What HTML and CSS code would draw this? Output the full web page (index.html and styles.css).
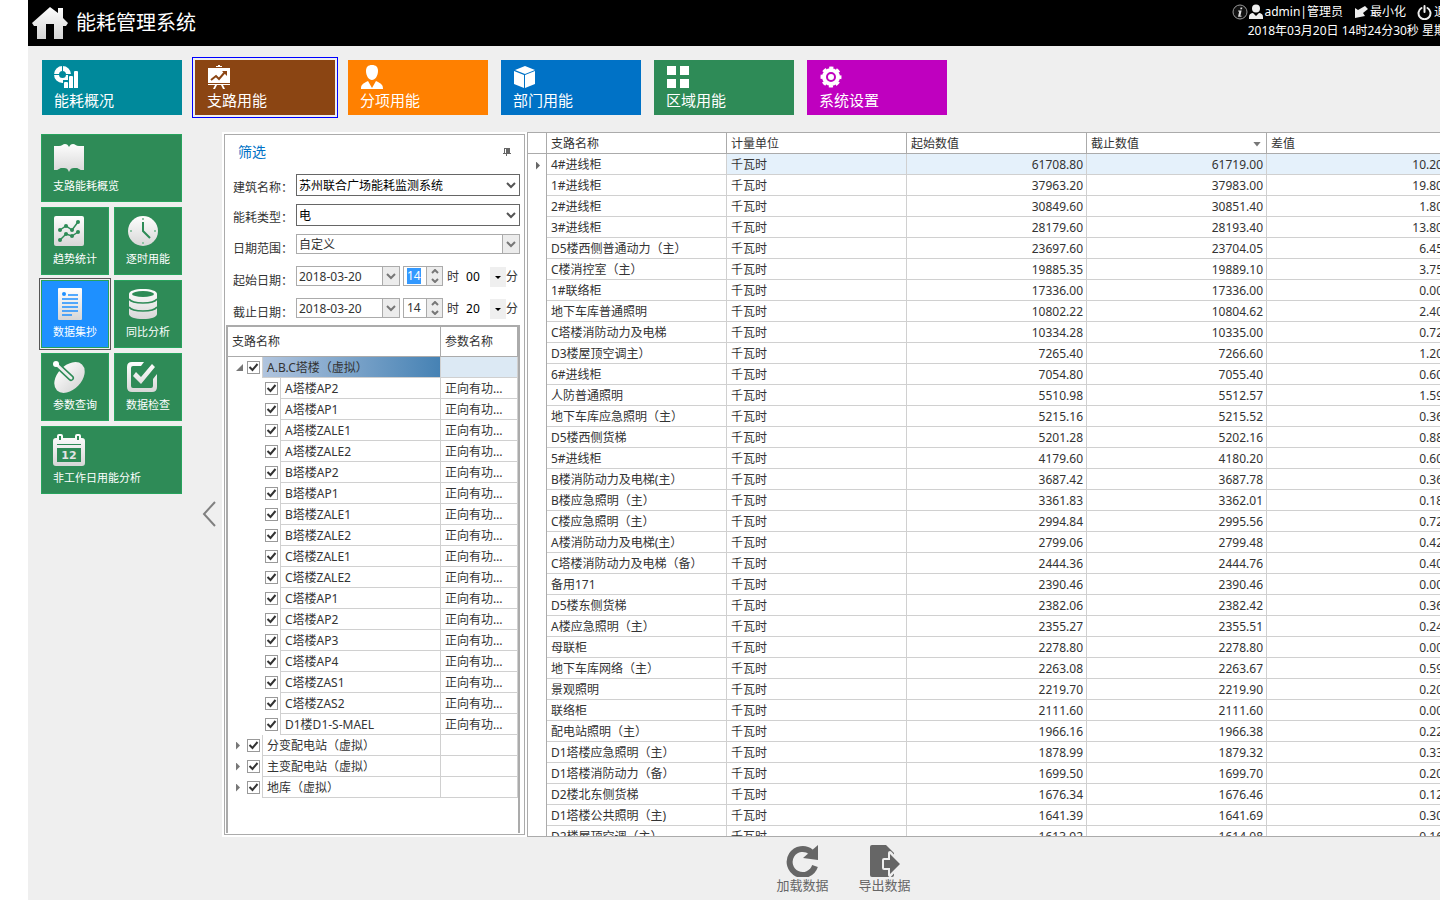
FILE: index.html
```html
<!DOCTYPE html>
<html lang="zh-CN">

<head>
  <meta charset="UTF-8" />
  <meta name="viewport" content="width=device-width, initial-scale=1.0" />
  <link rel="stylesheet" href="styles.css">
  <title>能耗管理系统</title>
</head>

<body>
  <!-- 图标共用的渐变 -->
  <svg class="defs" width="0" height="0" aria-hidden="true">
    <defs>
      <linearGradient id="silver" x1="0" y1="0" x2="0" y2="32" gradientUnits="userSpaceOnUse">
        <stop offset="0" stop-color="#fff" />
        <stop offset="1" stop-color="#d6d6d6" />
      </linearGradient>
    </defs>
  </svg>

  <div class="app">
    <header class="header">
      <div class="brand">
        <svg width="36" height="34" viewBox="0 0 36 34" fill="url(#silver)">
          <path d="M18 1L0 17l2 3h3v13h9V18h8v15h9V20h3l2-3-5-5V2h-5v5z" />
        </svg>
        <h1>能耗管理系统</h1>
      </div>
      <div class="status">
        <div class="status-row">
          <button class="link" aria-label="关于">
            <svg width="16" height="16" viewBox="0 0 16 16">
              <circle cx="8" cy="8" r="7" fill="#111" stroke="#999" />
              <path d="M8.600 3.500h1.800l-.4 1.800H8.200zM6.200 6.500h3.400l-1.200 5.200h1.200l-.2 1H6l1.200-5.200H6z" fill="#ddd" />
            </svg>
          </button>
          <button class="link user">
            <svg width="14" height="16" viewBox="0 0 14 16" fill="#eee">
              <circle cx="7" cy="4.500" r="4" />
              <path d="M0 15v-2c0-3 2-4 4-4l3 3 3-3c2 0 4 1 4 4v2z" />
            </svg>
            <span>admin|管理员</span>
          </button>
          <button class="link">
            <svg width="14" height="14" viewBox="0 0 14 14" fill="#eee">
              <path d="M11 1l3 3-5 4 2 3-10 2V3l3 2z" />
            </svg>
            <span>最小化</span>
          </button>
          <button class="link">
            <svg width="15" height="15" viewBox="0 0 15 15" fill="none" stroke="#eee" stroke-width="2" stroke-linecap="round">
              <path d="M4.500 3a6 6 0 1 0 6 0M7.500 1v6" />
            </svg>
            <span>退出</span>
          </button>
        </div>
        <div>2018年03月20日 14时24分30秒 星期二</div>
      </div>
    </header>

    <nav class="nav">
      <button class="nav-tile teal">
        <svg width="24" height="24" viewBox="0 0 24 24">
          <circle cx="8.500" cy="9.500" r="6" fill="none" stroke="#fff" stroke-width="5" />
          <path d="M0 9.500h6M11 9.500h6M8.500 1v5" stroke="#00899b" />
          <path d="M9 15h5V9h5V5h5v19H9z" fill="#00899b" />
          <path d="M10 18q0-1 1-1h2q1 0 1 1v5h-4zM15 12q0-1 1-1h2q1 0 1 1v11h-4zM20 7q0-1 1-1h2q1 0 1 1v16h-4z" fill="#fff" />
        </svg>
        <span>能耗概况</span>
      </button>
      <button class="nav-tile brown active">
        <svg width="24" height="24" viewBox="0 0 24 24">
          <path d="M9 1h2V0h2v1h2v1h-6zM1 3h22v15H1zM1 19h22v1H1zM8 20h2l-2 4H6zM14 20h2l2 4h-2z" fill="#fff" />
          <path d="M4 15l5-4 3 3 6-7" fill="none" stroke="#8b4513" stroke-width="2" />
          <path d="M15 6h5v5z" fill="#8b4513" />
        </svg>
        <span>支路用能</span>
      </button>
      <button class="nav-tile orange">
        <svg width="24" height="24" viewBox="0 0 24 24" fill="#fff">
          <path d="M12 0c4 0 6 2 6 6 0 5-3 9-6 9s-6-4-6-9c0-4 2-6 6-6zM1 24c0-4 1-5 7-8l4 7 4-7c6 3 7 4 7 8z" />
        </svg>
        <span>分项用能</span>
      </button>
      <button class="nav-tile blue">
        <svg width="24" height="24" viewBox="0 0 24 24" fill="#fff">
          <path d="M12 1l10 4-10 4L2 5zM1 6l10 4v13L1 19zM22 6l-10 4v13l10-4z" />
        </svg>
        <span>部门用能</span>
      </button>
      <button class="nav-tile green">
        <svg width="24" height="24" viewBox="0 0 24 24" fill="#fff">
          <path d="M1 1h9v9H1zM14 1h9v9h-9zM1 14h9v9H1zM14 14h9v9h-9z" />
        </svg>
        <span>区域用能</span>
      </button>
      <button class="nav-tile purple">
        <svg width="24" height="24" viewBox="0 0 24 24">
          <circle cx="12" cy="12" r="9" fill="none" stroke="#fff" stroke-width="3" stroke-dasharray="4 3.070" stroke-dashoffset="2" />
          <circle cx="12" cy="12" r="9" fill="#fff" />
          <circle cx="12" cy="12" r="4" fill="none" stroke="#bf00bf" stroke-width="2" />
        </svg>
        <span>系统设置</span>
      </button>
    </nav>

    <div class="content">
      <aside class="sidebar">
        <button class="tile wide">
          <svg width="32" height="32" viewBox="0 0 32 32" fill="url(#silver)">
            <path d="M1 4h5c3 0 4-2 6-2s3 1 4 3c1-2 2-3 4-3s3 2 6 2h5v24h-2c-3 0-3-2-6-2s-5 0-6 2l-1 2-1-2c-1-2-3-2-6-2s-3 2-6 2H1z" />
          </svg>
          <span>支路能耗概览</span>
        </button>
        <button class="tile">
          <svg width="32" height="32" viewBox="0 0 32 32">
            <rect x="1" y="1" width="30" height="30" rx="2" fill="url(#silver)" />
            <g fill="none" stroke="#2e8b57" stroke-width="1.500">
              <path d="M7 15l6-4 6 4 6-8M7 25l6-6 6 2 6-4" />
            </g>
            <g fill="#2e8b57">
              <circle cx="7" cy="15" r="2" /><circle cx="13" cy="11" r="2" /><circle cx="19" cy="15" r="2" /><circle cx="25" cy="7" r="2" />
              <circle cx="7" cy="25" r="2" /><circle cx="13" cy="19" r="2" /><circle cx="19" cy="21" r="2" /><circle cx="25" cy="17" r="2" />
            </g>
          </svg>
          <span>趋势统计</span>
        </button>
        <button class="tile">
          <svg width="32" height="32" viewBox="0 0 32 32">
            <circle cx="17" cy="16" r="15" fill="url(#silver)" />
            <path d="M17 7v9l7 7" fill="none" stroke="#2e8b57" stroke-width="2" />
            <path d="M16 3h2v2h-2zM16 27h2v2h-2zM4 15h2v2H4zM28 15h2v2h-2z" fill="#8fc3a5" />
          </svg>
          <span>逐时用能</span>
        </button>
        <button class="tile active">
          <svg width="32" height="32" viewBox="0 0 32 32">
            <rect x="5" y="0" width="24" height="32" rx="1" fill="url(#silver)" />
            <circle cx="11" cy="6" r="2" fill="#1e90ff" />
            <path d="M15 7h10M9 11h16M9 15h16M9 19h16M9 23h16M9 27h10" stroke="#1e90ff" stroke-width="1.500" />
          </svg>
          <span>数据集抄</span>
        </button>
        <button class="tile">
          <svg width="32" height="32" viewBox="0 0 32 32">
            <path d="M3 6v20c0 3 6 5 14 5s14-2 14-5V6c0-3-6-5-14-5S3 3 3 6z" fill="url(#silver)" />
            <ellipse cx="17" cy="6" rx="11" ry="3" fill="#2e8b57" />
            <path d="M3 11c2 3 8 4 14 4s12-1 14-4M3 19c2 3 8 4 14 4s12-1 14-4" fill="none" stroke="#2e8b57" stroke-width="1.500" />
          </svg>
          <span>同比分析</span>
        </button>
        <button class="tile">
          <svg width="32" height="32" viewBox="0 0 32 32">
            <ellipse cx="16.500" cy="16.500" rx="18" ry="12" transform="rotate(-46 16.500 16.500)" fill="url(#silver)" />
            <path d="M3 3l15 14" stroke="#2e8b57" stroke-width="6" stroke-linecap="round" />
            <path d="M3 3l15 14" stroke="#eee" stroke-width="3" stroke-linecap="round" />
            <circle cx="3" cy="3" r="3" fill="#fff" />
          </svg>
          <span>参数查询</span>
        </button>
        <button class="tile">
          <svg width="32" height="32" viewBox="0 0 32 32">
            <path d="M18 1H6Q1 1 1 6v20q0 5 5 5h20q5 0 5-5V13l-4 5v7q0 2-2 2H7q-2 0-2-2V7q0-2 2-2h8z" fill="url(#silver)" />
            <path d="M7 15l3-4 5 5L26 3l3 3-14 17z" fill="url(#silver)" />
          </svg>
          <span>数据检查</span>
        </button>
        <button class="tile wide">
          <svg width="32" height="32" viewBox="0 0 32 32">
            <path d="M3 4h1V2q0-2 2-2h2q2 0 2 2v2h12V2q0-2 2-2h2q2 0 2 2v2h1q3 0 3 3v22q0 3-3 3H3q-3 0-3-3V7q0-3 3-3z" fill="url(#silver)" />
            <path d="M6 2h2v4H6zM24 2h2v4h-2zM4 10h24v1H4zM4 14h24v14H4z" fill="#2e8b57" />
            <text class="cal-day" x="16" y="25" text-anchor="middle">12</text>
          </svg>
          <span>非工作日用能分析</span>
        </button>
      </aside>

      <button class="collapse" aria-label="收起">
        <svg width="14" height="26" viewBox="0 0 14 26" fill="none" stroke="#808080" stroke-width="2">
          <path d="M13 1L2 13l11 12" />
        </svg>
      </button>

      <main class="main">
        <div class="panels">
          <section class="filter">
            <div class="filter-head">
              <h2>筛选</h2>
              <button class="pin" aria-label="固定">
                <svg width="8" height="8" viewBox="0 0 8 8" fill="#666">
                  <path d="M1 0h6v5h1v1H0V5h1zM3 6h1v2H3zM2 1v4h1V1z" fill-rule="evenodd" />
                </svg>
              </button>
            </div>

            <form class="form">
              <div class="field">
                <label for="building">建筑名称：</label>
                <select id="building" class="box combo dark">
                  <option>苏州联合广场能耗监测系统</option>
                </select>
              </div>
              <div class="field">
                <label for="energy">能耗类型：</label>
                <select id="energy" class="box combo dark">
                  <option>电</option>
                </select>
              </div>
              <div class="field tall">
                <label for="range">日期范围：</label>
                <select id="range" class="box combo">
                  <option>自定义</option>
                </select>
              </div>
              <div class="field tall">
                <label for="start">起始日期：</label>
                <select id="start" class="box combo date">
                  <option>2018-03-20</option>
                </select>
                <div class="box spin">
                  <input id="start-hour" type="text" value="14" aria-label="起始小时">
                  <div class="spin-buttons">
                    <button type="button" aria-label="加"><svg width="8" height="5" viewBox="0 0 8 5"><path d="M1 4l3-3 3 3" /></svg></button>
                    <button type="button" aria-label="减"><svg width="8" height="5" viewBox="0 0 8 5"><path d="M1 1l3 3 3-3" /></svg></button>
                  </div>
                </div>
                <span class="unit">时</span>
                <select class="minute" aria-label="起始分钟">
                  <option>00</option>
                </select>
                <span class="unit-end">分</span>
              </div>
              <div class="field tall">
                <label for="end">截止日期：</label>
                <select id="end" class="box combo date">
                  <option>2018-03-20</option>
                </select>
                <div class="box spin">
                  <input type="text" value="14" aria-label="截止小时">
                  <div class="spin-buttons">
                    <button type="button" aria-label="加"><svg width="8" height="5" viewBox="0 0 8 5"><path d="M1 4l3-3 3 3" /></svg></button>
                    <button type="button" aria-label="减"><svg width="8" height="5" viewBox="0 0 8 5"><path d="M1 1l3 3 3-3" /></svg></button>
                  </div>
                </div>
                <span class="unit">时</span>
                <select class="minute" aria-label="截止分钟">
                  <option>20</option>
                </select>
                <span class="unit-end">分</span>
              </div>
            </form>

            <div class="tree-wrap">
              <table class="tree">
                <thead>
                  <tr>
                    <th>支路名称</th>
                    <th class="param">参数名称</th>
                  </tr>
                </thead>
                <tbody id="tree"></tbody>
              </table>
            </div>
          </section>

          <section class="grid-wrap">
            <table class="grid">
              <thead>
                <tr>
                  <th class="mark"></th>
                  <th>支路名称</th>
                  <th>计量单位</th>
                  <th>起始数值</th>
                  <th class="sorted">截止数值</th>
                  <th>差值</th>
                </tr>
              </thead>
              <tbody id="grid"></tbody>
            </table>
          </section>
        </div>

        <footer class="actions">
          <button class="action">
            <svg width="32" height="32" viewBox="0 0 32 32">
              <path d="M25 7A13 13 0 1 0 29 21" fill="none" stroke="#666" stroke-width="6" />
              <path d="M32 0v15l-15-2z" fill="#666" />
            </svg>
            <span>加载数据</span>
          </button>
          <button class="action">
            <svg width="32" height="32" viewBox="0 0 32 32">
              <path d="M3 0h14l8 8v22q0 2-2 2H3q-2 0-2-2V2q0-2 2-2z" fill="#666" />
              <path d="M15 15h6V8l10 11-10 11v-7h-6z" fill="#666" stroke="#efefef" stroke-width="4" stroke-linejoin="round" />
              <path d="M15 15h6V9l10 10-10 10v-6h-6z" fill="#666" />
            </svg>
            <span>导出数据</span>
          </button>
        </footer>
      </main>
    </div>
  </div>

  <script>
    // 支路树：[层级, 名称]
    const branches = [
      [0, 'A.B.C塔楼（虚拟）'],
      [1, 'A塔楼AP2'],
      [1, 'A塔楼AP1'],
      [1, 'A塔楼ZALE1'],
      [1, 'A塔楼ZALE2'],
      [1, 'B塔楼AP2'],
      [1, 'B塔楼AP1'],
      [1, 'B塔楼ZALE1'],
      [1, 'B塔楼ZALE2'],
      [1, 'C塔楼ZALE1'],
      [1, 'C塔楼ZALE2'],
      [1, 'C塔楼AP1'],
      [1, 'C塔楼AP2'],
      [1, 'C塔楼AP3'],
      [1, 'C塔楼AP4'],
      [1, 'C塔楼ZAS1'],
      [1, 'C塔楼ZAS2'],
      [1, 'D1楼D1-S-MAEL'],
      [0, '分变配电站（虚拟）'],
      [0, '主变配电站（虚拟）'],
      [0, '地库（虚拟）']
    ]

    // 抄表数据：[名称, 起始, 截止, 差值]
    const readings = [
      ['4#进线柜', '61708.80', '61719.00', '10.20'],
      ['1#进线柜', '37963.20', '37983.00', '19.80'],
      ['2#进线柜', '30849.60', '30851.40', '1.80'],
      ['3#进线柜', '28179.60', '28193.40', '13.80'],
      ['D5楼西侧普通动力（主）', '23697.60', '23704.05', '6.45'],
      ['C楼消控室（主）', '19885.35', '19889.10', '3.75'],
      ['1#联络柜', '17336.00', '17336.00', '0.00'],
      ['地下车库普通照明', '10802.22', '10804.62', '2.40'],
      ['C塔楼消防动力及电梯', '10334.28', '10335.00', '0.72'],
      ['D3楼屋顶空调主）', '7265.40', '7266.60', '1.20'],
      ['6#进线柜', '7054.80', '7055.40', '0.60'],
      ['人防普通照明', '5510.98', '5512.57', '1.59'],
      ['地下车库应急照明（主）', '5215.16', '5215.52', '0.36'],
      ['D5楼西侧货梯', '5201.28', '5202.16', '0.88'],
      ['5#进线柜', '4179.60', '4180.20', '0.60'],
      ['B楼消防动力及电梯(主）', '3687.42', '3687.78', '0.36'],
      ['B楼应急照明（主）', '3361.83', '3362.01', '0.18'],
      ['C楼应急照明（主）', '2994.84', '2995.56', '0.72'],
      ['A楼消防动力及电梯(主）', '2799.06', '2799.48', '0.42'],
      ['C塔楼消防动力及电梯（备）', '2444.36', '2444.76', '0.40'],
      ['备用171', '2390.46', '2390.46', '0.00'],
      ['D5楼东侧货梯', '2382.06', '2382.42', '0.36'],
      ['A楼应急照明（主）', '2355.27', '2355.51', '0.24'],
      ['母联柜', '2278.80', '2278.80', '0.00'],
      ['地下车库网络（主）', '2263.08', '2263.67', '0.59'],
      ['景观照明', '2219.70', '2219.90', '0.20'],
      ['联络柜', '2111.60', '2111.60', '0.00'],
      ['配电站照明（主）', '1966.16', '1966.38', '0.22'],
      ['D1塔楼应急照明（主）', '1878.99', '1879.32', '0.33'],
      ['D1塔楼消防动力（备）', '1699.50', '1699.70', '0.20'],
      ['D2楼北东侧货梯', '1676.34', '1676.46', '0.12'],
      ['D1塔楼公共照明（主)', '1641.39', '1641.69', '0.30'],
      ['D2楼屋顶空调（主）', '1613.92', '1614.08', '0.16']
    ]

    document.getElementById('tree').innerHTML = branches.map(([level, name], idx) => `
      <tr class="level-${level} ${idx === 0 ? 'selected' : ''}">
        <td>
          <div class="node">
            ${level === 0 ? `<button class="toggle ${idx === 0 ? 'open' : ''}" aria-label="展开"></button>` : ''}
            <input type="checkbox" id="node-${idx}" checked>
            <label for="node-${idx}">${name}</label>
          </div>
        </td>
        <td class="param">${level === 1 ? '正向有功总电能' : ''}</td>
      </tr>`).join('')

    document.getElementById('grid').innerHTML = readings.map(([name, start, end, diff], idx) => `
      <tr class="${idx === 0 ? 'selected' : ''}">
        <td class="mark"></td>
        <td class="name">${name}</td>
        <td>千瓦时</td>
        <td class="num">${start}</td>
        <td class="num">${end}</td>
        <td class="num">${diff}</td>
      </tr>`).join('')

    // 默认选中起始小时
    const startHour = document.getElementById('start-hour')
    startHour.focus()
    startHour.select()
  </script>
</body>

</html>
```
FILE: styles.css
```css
:root {
  --line: #ababab;
  --row-line: #d0d0d0;
  --text: #333;
  --page: #efefef;
}

* {
  box-sizing: border-box;
}

body {
  margin: 0;
  height: 100vh;
  overflow: hidden;
  background-color: #fff;
  color: var(--text);
  font-family: "Noto Sans", "Noto Sans CJK SC", sans-serif;
  font-size: 12px;
  line-height: 16px;
}

button,
input,
select {
  font: inherit;
  color: inherit;
  margin: 0;
}

button {
  padding: 0;
  border: 0;
  background: none;
  cursor: pointer;
}

svg {
  display: block;
  flex: none;
}

.defs {
  position: absolute;
}

.app {
  display: flex;
  flex-direction: column;
  width: 100%;
  height: 100vh;
  margin-left: 28px;
  background-color: var(--page);
}

/* 顶部 */
.header {
  display: flex;
  justify-content: space-between;
  align-items: center;
  height: 46px;
  padding: 0 10px 0 4px;
  background-color: #000;
  color: #fff;
}

.brand {
  display: flex;
  align-items: center;
  gap: 8px;
}

.brand h1 {
  margin: 0;
  font-size: 20px;
  line-height: 24px;
  font-weight: 400;
}

.status {
  display: flex;
  flex-direction: column;
  align-items: flex-end;
  gap: 3px;
  padding-bottom: 3px;
  white-space: nowrap;
}

.status-row {
  display: flex;
  gap: 11px;
}

.link {
  display: flex;
  align-items: center;
  gap: 2px;
}

.user {
  margin-left: -10px;
}

/* 一级菜单 */
.nav {
  display: flex;
  gap: 13px;
  padding: 14px 14px 17px;
}

.nav-tile {
  display: flex;
  flex-direction: column;
  align-items: flex-start;
  gap: 1px;
  width: 140px;
  height: 55px;
  padding: 5px 12px;
  color: #fff;
  font-size: 15px;
  line-height: 20px;
}

.nav-tile.active {
  outline: 1px solid #00f;
  outline-offset: 2px;
}

.teal {
  background-color: #00899b;
}

.brown {
  background-color: #8b4513;
}

.orange {
  background-color: #ff8000;
}

.blue {
  background-color: #0072c6;
}

.green {
  background-color: #2e8b57;
}

.purple {
  background-color: #bf00bf;
}

.content {
  display: flex;
  flex: 1;
  min-height: 0;
}

/* 二级菜单 */
.sidebar {
  display: grid;
  grid-template-columns: 68px 68px;
  grid-auto-rows: 68px;
  align-content: start;
  gap: 5px;
  padding: 2px 0 0 13px;
}

.tile {
  display: flex;
  flex-direction: column;
  align-items: flex-start;
  gap: 4px;
  padding: 7px 11px;
  border: 1px solid #27a35d;
  background-color: #2e8b57;
  color: #fff;
  font-size: 11px;
  white-space: nowrap;
}

.tile.wide {
  grid-column: span 2;
}

.tile.active {
  background-color: #1e90ff;
  outline: 1px solid #555;
  outline-offset: 1px;
}

.cal-day {
  font-family: "DejaVu Sans", sans-serif;
  font-size: 11px;
  font-weight: bold;
  fill: #e4e4e4;
}

.collapse {
  display: flex;
  align-items: center;
  justify-content: center;
  width: 40px;
  padding: 0 0 4px 14px;
}

.main {
  display: flex;
  flex-direction: column;
  flex: 1;
  min-width: 0;
}

.panels {
  display: flex;
  flex: 1;
  min-height: 0;
  background-color: #fff;
}

/* 筛选面板 */
.filter {
  display: flex;
  flex-direction: column;
  flex: none;
  width: 301px;
  margin: 2px;
  border: 1px solid var(--line);
}

.filter-head {
  display: flex;
  justify-content: space-between;
  align-items: center;
  padding: 7px 13px 0;
}

.filter-head h2 {
  margin: 0;
  color: #0072c6;
  font-size: 14px;
  line-height: 20px;
  font-weight: 400;
}

.form {
  display: flex;
  flex-direction: column;
  gap: 8px;
  padding: 12px 4px 3px 8px;
}

.field {
  display: flex;
  align-items: flex-start;
}

.field.tall {
  min-height: 24px;
}

.field > label {
  flex: none;
  width: 63px;
  margin-top: 6px;
}

.field.tall > label {
  margin-top: 7px;
}

.box {
  height: 20px;
  border: 1px solid var(--line);
  border-radius: 0;
  background-color: #fff;
}

.combo {
  flex: 1;
  min-width: 0;
  padding: 2px 2px 0;
  appearance: none;
  background-image: url("data:image/svg+xml,%3Csvg xmlns='http://www.w3.org/2000/svg' width='17' height='18'%3E%3Cpath fill='%23ececec' d='M0 0h17v18H0z'/%3E%3Cpath stroke='%23ababab' d='M.5 0v18'/%3E%3Cpath fill='none' stroke='%23777' stroke-width='2' d='M5 7l4 4 4-4'/%3E%3C/svg%3E");
  background-repeat: no-repeat;
  background-position: right center;
}

.combo.dark {
  height: 22px;
  border-color: #666;
  color: #000;
  background-image: url("data:image/svg+xml,%3Csvg xmlns='http://www.w3.org/2000/svg' width='17' height='18'%3E%3Cpath fill='none' stroke='%23555' stroke-width='2' d='M5 7l4 4 4-4'/%3E%3C/svg%3E");
}

.combo.date {
  flex: none;
  width: 104px;
}

.spin {
  display: flex;
  width: 40px;
  margin-left: 3px;
}

.spin input {
  flex: 1;
  min-width: 0;
  padding: 0 0 0 3px;
  border: 0;
  outline: 0;
  background: none;
}

.spin input::selection {
  background-color: #39f;
  color: #fff;
}

.spin-buttons {
  display: flex;
  flex-direction: column;
  width: 16px;
  border-left: 1px solid var(--line);
  background-color: #ececec;
}

.spin-buttons button {
  display: flex;
  flex: 1;
  align-items: center;
  justify-content: center;
}

.spin-buttons path {
  fill: none;
  stroke: #777;
  stroke-width: 2;
}

.unit {
  margin: 3px 7px 0 4px;
}

.unit-end {
  margin-top: 3px;
}

.minute {
  width: 40px;
  height: 20px;
  margin-top: 1px;
  padding: 0;
  border: 0;
  appearance: none;
  color: #000;
  background: url("data:image/svg+xml,%3Csvg xmlns='http://www.w3.org/2000/svg' width='16' height='20'%3E%3Cpath fill='%23efefef' d='M0 0h16v20H0z'/%3E%3Cpath d='M5 9h6l-3 3z'/%3E%3C/svg%3E") no-repeat right center #fff;
}

/* 支路树 */
.tree-wrap {
  flex: 1;
  min-height: 0;
  margin: 0 4px 1px 1px;
  border: 2px solid var(--line);
  border-bottom: 0;
  overflow: hidden;
}

.tree,
.grid {
  border-collapse: separate;
  border-spacing: 0;
  table-layout: fixed;
}

.tree {
  width: 100%;
}

.tree th,
.grid th {
  padding: 1px 3px 0 4px;
  border-right: 1px solid var(--line);
  border-bottom: 1px solid var(--line);
  text-align: left;
  font-weight: 400;
}

.tree th {
  height: 30px;
}

.tree td {
  height: 21px;
  padding: 0;
}

.tree .param {
  width: 77px;
  padding: 1px 8px 0 4px;
  overflow: hidden;
  text-overflow: ellipsis;
  white-space: nowrap;
}

.tree td.param {
  border-right: 1px solid var(--row-line);
  border-bottom: 1px solid var(--row-line);
}

.node {
  display: flex;
  align-items: center;
  height: 21px;
  padding-left: 8px;
}

.level-1 .node {
  padding-left: 37px;
}

.node label {
  flex: 1;
  height: 21px;
  margin-left: 2px;
  padding: 3px 4px 0;
  border: solid var(--row-line);
  border-width: 0 1px 1px;
}

.toggle {
  width: 11px;
  height: 11px;
}

/* 展开/收起三角 */
.toggle::before {
  content: "";
  display: block;
  width: 4px;
  height: 8px;
  background-color: #777;
  clip-path: polygon(0 0, 100% 50%, 0 100%);
}

.toggle.open::before {
  width: 7px;
  height: 7px;
  clip-path: polygon(100% 0, 100% 100%, 0 100%);
}

.node input {
  flex: none;
  width: 13px;
  height: 13px;
  appearance: none;
  border: 1px solid #999;
  background: url("data:image/svg+xml,%3Csvg xmlns='http://www.w3.org/2000/svg' width='11' height='11'%3E%3Cpath fill='none' stroke='%23333' stroke-width='2' d='M1.500 5l3 3 5-6'/%3E%3C/svg%3E") center no-repeat #fff;
}

.selected .node label {
  background-image: linear-gradient(to right, #b0c4de, #4682b4);
}

.selected td.param {
  background-color: #dce9f4;
}

/* 数据表 */
.grid-wrap {
  flex: 1;
  min-width: 0;
  border: 1px solid var(--line);
  overflow: hidden;
}

.grid {
  width: 919px;
}

.grid th,
.grid td {
  height: 21px;
}

.grid td {
  padding: 2px 3px 0 4px;
  border-right: 1px solid var(--row-line);
  border-bottom: 1px solid var(--row-line);
  white-space: nowrap;
}

.grid .mark {
  width: 19px;
  border-right-color: var(--line);
}

.grid td.mark {
  border-bottom: 0;
}

.grid .num {
  text-align: right;
}

.grid .selected td {
  background-color: #e5f1fb;
}

.grid .selected .mark,
.grid .selected .name {
  background-color: #fff;
}

.selected .mark::before {
  content: "";
  display: block;
  width: 4px;
  height: 8px;
  margin-left: 4px;
  background-color: #666;
  clip-path: polygon(0 0, 100% 50%, 0 100%);
}

/* 降序箭头 */
.sorted::after {
  content: "";
  float: right;
  width: 8px;
  height: 5px;
  margin: 6px 2px 0 0;
  background-color: #777;
  clip-path: polygon(0 0, 100% 0, 50% 100%);
}

/* 底部操作 */
.actions {
  display: flex;
  justify-content: center;
  align-items: flex-start;
  gap: 30px;
  height: 63px;
  padding: 8px 3px 0 0;
}

.action {
  display: flex;
  flex-direction: column;
  align-items: center;
  gap: 0;
  color: #666;
  font-size: 13px;
}
```
